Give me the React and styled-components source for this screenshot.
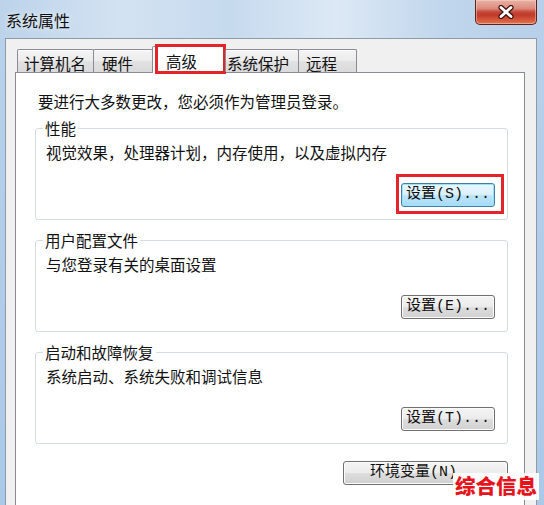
import React from "react";
import styled, { createGlobalStyle, css } from "styled-components";

const GlobalStyle = createGlobalStyle`
  html, body { margin: 0; padding: 0; background: #b3cde8; }
  body { font-family: "Noto Sans CJK SC", "Noto Sans", sans-serif; color: #111; overflow: hidden; }
  #root { width: 544px; height: 505px; }
`;

const CJK = `"Noto Sans CJK SC", "Noto Sans", sans-serif`;

const Window = styled.div`
  position: relative;
  width: 544px;
  height: 505px;
  overflow: hidden;
  display: flex;
  flex-direction: column;
  background: linear-gradient(180deg, #b9d2ec 0%, #aac8e8 100%);
`;

const TitleBar = styled.div`
  height: 38px;
  flex: none;
  display: flex;
  justify-content: space-between;
  align-items: flex-start;
  padding: 0 7px 0 6px;
  box-sizing: border-box;
  background: linear-gradient(90deg, #bcd3ea 0%, #d3e2f2 22%, #c6daee 42%, #dce8f5 62%, #c0d6ec 82%, #b7cfe9 100%);
`;

const Title = styled.div`
  padding-top: 10px;
  font-family: ${CJK};
  font-size: 16px;
  line-height: 21px;
  color: #101010;
  text-shadow: 0 0 6px rgba(255, 255, 255, 0.9);
`;

const CloseButton = styled.div`
  width: 62px;
  height: 25px;
  box-sizing: border-box;
  border: 1px solid #5e221b;
  border-top: none;
  border-radius: 0 0 5px 5px;
  display: flex;
  align-items: center;
  justify-content: center;
  background: linear-gradient(180deg, #e9b3a6 0%, #dc8b7c 35%, #c5473a 50%, #c23a2a 62%, #d65a3e 85%, #e07a55 100%);
  box-shadow: inset 0 0 0 1px rgba(255, 220, 210, 0.45);
`;

const Client = styled.div`
  flex: 1;
  margin: 0 7px 0 5px;
  border: 1px solid #8e9aa6;
  border-bottom: none;
  background: #f0f0f0;
  padding: 7px 11px 0 9px;
  display: flex;
  flex-direction: column;
  min-height: 0;
`;

const TabStrip = styled.div`
  display: flex;
  align-items: flex-end;
  padding-left: 3px;
  margin-bottom: -1px;
  position: relative;
  z-index: 1;
`;

const Tab = styled.div`
  position: relative;
  box-sizing: border-box;
  width: ${(p) => p.$w}px;
  padding-left: ${(p) => p.$pad}px;
  margin-left: -1px;
  display: flex;
  align-items: center;
  font-family: ${CJK};
  font-size: 15.5px;
  line-height: 20px;
  color: #111;
  border: 1px solid #898c95;
  border-bottom: none;
  border-radius: 2px 2px 0 0;
  ${(p) =>
    p.$active
      ? css`
          height: 27px;
          padding-top: 1px;
          background: #fff;
        `
      : css`
          height: 23px;
          margin-bottom: 1px;
          padding-top: 3px;
          background: linear-gradient(180deg, #f3f3f3 0%, #ececec 50%, #e2e2e2 51%, #dadada 100%);
          box-shadow: inset 0 1px 0 #fff;
        `}
  ${(p) =>
    p.$marked &&
    css`
      &::after {
        content: "";
        position: absolute;
        left: 2px;
        right: -1px;
        top: -3px;
        bottom: -1px;
        border: 3px solid #e3242b;
      }
    `}
`;

const Panel = styled.div`
  flex: 1;
  background: #fff;
  border: 1px solid #898c95;
  border-bottom: none;
  padding: 18px 16px 0 19px;
  display: flex;
  flex-direction: column;
`;

const Notice = styled.div`
  margin: 0 0 7px 3px;
  font-size: 15.5px;
  line-height: 20px;
`;

const Group = styled.fieldset`
  margin: 0 0 10px 0;
  padding: 4px 12px 12px 10px;
  min-width: 0;
  border: 1px solid #d2dce3;
  border-radius: 3px;
  display: flex;
  flex-direction: column;
`;

const Legend = styled.legend`
  padding: 0 2px;
  margin-left: -3px;
  font-size: 15.5px;
  line-height: 20px;
`;

const Desc = styled.div`
  font-size: 15.5px;
  line-height: 20px;
`;

const ButtonRow = styled.div`
  display: flex;
  justify-content: flex-end;
  margin-top: ${(p) => p.$top}px;
`;

const Button = styled.div`
  position: relative;
  box-sizing: border-box;
  width: ${(p) => p.$w}px;
  height: 24px;
  display: flex;
  align-items: center;
  justify-content: ${(p) => (p.$indent ? "flex-start" : "center")};
  padding-left: ${(p) => p.$indent || 0}px;
  font-family: "Liberation Mono", "Noto Sans CJK SC", monospace;
  font-size: 15px;
  line-height: 20px;
  color: #111;
  border-radius: 3px;
  ${(p) =>
    p.$default
      ? css`
          border: 1px solid #3c7fb1;
          background: linear-gradient(180deg, #eaf6fd 0%, #d9f0fc 50%, #bee6fd 51%, #a7d9f5 100%);
          box-shadow: inset 0 0 0 1px #9de3f7;
        `
      : css`
          border: 1px solid #707070;
          background: linear-gradient(180deg, #f4f4f4 0%, #ececec 50%, #dedede 51%, #d0d0d0 100%);
          box-shadow: inset 0 0 0 1px #fbfbfb;
        `}
  ${(p) =>
    p.$marked &&
    css`
      &::after {
        content: "";
        position: absolute;
        left: -6px;
        right: -10px;
        top: -10px;
        bottom: -8px;
        border: 3px solid #e3242b;
      }
    `}
`;

const Footer = styled.div`
  display: flex;
  justify-content: flex-end;
  margin-top: 7px;
`;

const Watermark = styled.div`
  position: absolute;
  left: 453px;
  top: 473px;
  padding: 2px 2px 4px 2px;
  font-family: ${CJK};
  font-size: 20.5px;
  font-weight: 900;
  line-height: 1;
  color: #e5141c;
  background: rgba(255, 255, 255, 0.92);
`;

const tabs = [
  { label: "计算机名", w: 77, pad: 6 },
  { label: "硬件", w: 60, pad: 8 },
  { label: "高级", w: 74, pad: 13, active: true },
  { label: "系统保护", w: 74, pad: 1 },
  { label: "远程", w: 59, pad: 7 },
];

const groups = [
  { legend: "性能", desc: "视觉效果，处理器计划，内存使用，以及虚拟内存", btn: "设置(S)...", def: true },
  { legend: "用户配置文件", desc: "与您登录有关的桌面设置", btn: "设置(E)..." },
  { legend: "启动和故障恢复", desc: "系统启动、系统失败和调试信息", btn: "设置(T)..." },
];

export default function App() {
  return (
    <>
      <GlobalStyle />
      <Window>
        <TitleBar>
          <Title>系统属性</Title>
          <CloseButton>
            <svg width="18" height="14" viewBox="0 0 18 14">
              <path d="M4 2.5 L14 11.5 M14 2.5 L4 11.5" stroke="#3b1410" strokeWidth="5.2" strokeLinecap="round" fill="none" />
              <path d="M4 2.5 L14 11.5 M14 2.5 L4 11.5" stroke="#ffffff" strokeWidth="2.8" strokeLinecap="round" fill="none" />
            </svg>
          </CloseButton>
        </TitleBar>
        <Client>
          <TabStrip>
            {tabs.map((t) => (
              <Tab key={t.label} $w={t.w} $pad={t.pad} $active={t.active} $marked={t.active}>
                {t.label}
              </Tab>
            ))}
          </TabStrip>
          <Panel>
            <Notice>要进行大多数更改，您必须作为管理员登录。</Notice>
            {groups.map((g) => (
              <Group key={g.legend}>
                <Legend>{g.legend}</Legend>
                <Desc>{g.desc}</Desc>
                <ButtonRow $top={21}>
                  <Button $w={94} $default={g.def} $marked={g.def}>
                    {g.btn}
                  </Button>
                </ButtonRow>
              </Group>
            ))}
            <Footer>
              <Button $w={165} $indent={26}>环境变量(N)</Button>
            </Footer>
          </Panel>
        </Client>
        <Watermark>综合信息</Watermark>
      </Window>
    </>
  );
}
